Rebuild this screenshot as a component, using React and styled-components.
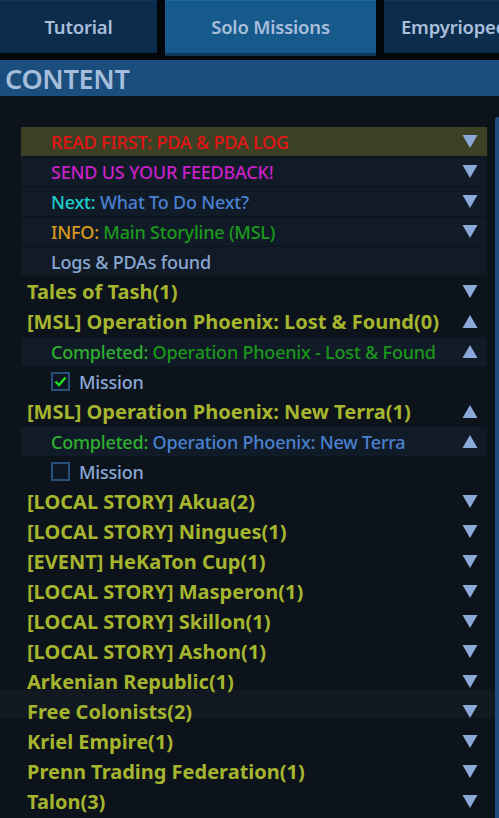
import React from "react";
import styled, { createGlobalStyle } from "styled-components";

const Global = createGlobalStyle`
  html, body { margin: 0; padding: 0; background: #0c131b; }
  body { font-family: "Noto Sans", "Open Sans", sans-serif; overflow: hidden; }
  #root { width: 499px; height: 818px; overflow: hidden; }
`;

const Page = styled.div`
  width: 499px;
  height: 818px;
  display: flex;
  flex-direction: column;
  background: #0c131b;
  overflow: hidden;
`;

const TabBar = styled.div`
  display: flex;
  gap: 8px;
  height: 60px;
  background: #03070b;
  flex-shrink: 0;
`;

const Tab = styled.div`
  flex: 0 0 ${(p) => p.$w}px;
  height: 53px;
  display: flex;
  align-items: center;
  justify-content: ${(p) => (p.$left ? "flex-start" : "center")};
  padding-left: ${(p) => (p.$left ? "17px" : "0")};
  padding-bottom: 2px;
  box-sizing: border-box;
  background: ${(p) => (p.$active ? "#165a8b" : "#0b2c4b")};
  border-top: 1px solid ${(p) => (p.$active ? "#1d6a9f" : "#12375a")};
  box-shadow: ${(p) => (p.$active ? "0 3px 0 0 #0d3658" : "none")};
  color: #a9bedb;
  font-size: 18.5px;
  font-weight: 600;
  letter-spacing: -0.2px;
  white-space: nowrap;
  overflow: hidden;
`;

const Header = styled.div`
  height: 36px;
  background: #1b4e7d;
  display: flex;
  align-items: center;
  padding-left: 5px;
  color: #a6bedb;
  font-size: 27px;
  font-weight: 600;
  letter-spacing: -0.3px;
  flex-shrink: 0;
`;

const Body = styled.div`
  flex: 1;
  display: flex;
  padding-top: 31px;
  padding-left: 21px;
  background:
    linear-gradient(to bottom, transparent 594px, rgba(255,255,255,0.025) 594px, rgba(255,255,255,0.025) 622px, transparent 622px),
    #0c131b;
`;

const List = styled.div`
  display: flex;
  flex-direction: column;
  gap: 1px;
  flex: 0 0 466px;
`;

const ScrollTrack = styled.div`
  flex: 0 0 4px;
  margin-left: 8px;
  margin-top: -10px;
  background: #1d4c7c;
  border-radius: 3px 0 0 0;
`;

const Row = styled.div`
  height: 29px;
  display: flex;
  align-items: center;
  box-sizing: border-box;
  padding-left: ${(p) => p.$indent}px;
  padding-right: 9px;
  background: ${(p) => p.$bg || "transparent"};
  font-size: ${(p) => (p.$cat ? "20px" : "18px")};
  font-weight: ${(p) => (p.$cat ? 700 : 500)};
  letter-spacing: ${(p) => (p.$cat ? "0px" : "-0.2px")};
  color: ${(p) => p.$color || "#a8b830"};
  white-space: nowrap;
`;

const Label = styled.span`
  flex: 1;
`;

const Part = styled.span`
  color: ${(p) => p.$color};
`;

const Arrow = styled.svg`
  width: 16px;
  height: 15px;
  flex-shrink: 0;
`;

const Box = styled.span`
  width: 19px;
  height: 19px;
  box-sizing: border-box;
  border: 2px solid #264f7c;
  background: #0d1724;
  margin-right: 9px;
  display: flex;
  align-items: center;
  justify-content: center;
`;

const Toggle = ({ up }) => (
  <Arrow viewBox="0 0 16 15">
    {up ? (
      <polygon points="8,1 15.5,14 0.5,14" fill="#8ba9d9" />
    ) : (
      <polygon points="0.5,1 15.5,1 8,14" fill="#8ba9d9" />
    )}
  </Arrow>
);

const YELLOW = "#a6b52e";
const SUB = "#111b27";

const rows = [
  { type: "sub", bg: "#3c4126", parts: [["READ FIRST: PDA & PDA LOG", "#e31414"]], arrow: "down" },
  { type: "sub", bg: SUB, parts: [["SEND US YOUR FEEDBACK!", "#c820c8"]], arrow: "down" },
  { type: "sub", bg: SUB, parts: [["Next: ", "#1ccccc"], ["What To Do Next?", "#4a80d0"]], arrow: "down" },
  { type: "sub", bg: SUB, parts: [["INFO: ", "#d99a1e"], ["Main Storyline (MSL)", "#1b9a1b"]], arrow: "down" },
  { type: "sub", bg: SUB, parts: [["Logs & PDAs found", "#89a8d2"]] },
  { type: "cat", text: "Tales of Tash(1)", arrow: "down" },
  { type: "cat", text: "[MSL] Operation Phoenix: Lost & Found(0)", arrow: "up" },
  { type: "sub", bg: SUB, parts: [["Completed: ", "#2eb02e"], ["Operation Phoenix - Lost & Found", "#1a961a"]], arrow: "up" },
  { type: "check", checked: true, text: "Mission" },
  { type: "cat", text: "[MSL] Operation Phoenix: New Terra(1)", arrow: "up" },
  { type: "sub", bg: SUB, parts: [["Completed: ", "#2eb02e"], ["Operation Phoenix: New Terra", "#4a80d0"]], arrow: "up" },
  { type: "check", checked: false, text: "Mission" },
  { type: "cat", text: "[LOCAL STORY] Akua(2)", arrow: "down" },
  { type: "cat", text: "[LOCAL STORY] Ningues(1)", arrow: "down" },
  { type: "cat", text: "[EVENT] HeKaTon Cup(1)", arrow: "down" },
  { type: "cat", text: "[LOCAL STORY] Masperon(1)", arrow: "down" },
  { type: "cat", text: "[LOCAL STORY] Skillon(1)", arrow: "down" },
  { type: "cat", text: "[LOCAL STORY] Ashon(1)", arrow: "down" },
  { type: "cat", text: "Arkenian Republic(1)", arrow: "down" },
  { type: "cat", text: "Free Colonists(2)", arrow: "down" },
  { type: "cat", text: "Kriel Empire(1)", arrow: "down" },
  { type: "cat", text: "Prenn Trading Federation(1)", arrow: "down" },
  { type: "cat", text: "Talon(3)", arrow: "down" },
];

export default function App() {
  return (
    <Page>
      <Global />
      <TabBar>
        <Tab $w={157}>Tutorial</Tab>
        <Tab $w={211} $active>Solo Missions</Tab>
        <Tab $w={160} $left>Empyriopedia</Tab>
      </TabBar>
      <Header>CONTENT</Header>
      <Body>
        <List>
          {rows.map((r, i) => {
            if (r.type === "cat") {
              return (
                <Row key={i} $cat $indent={6} $color={YELLOW}>
                  <Label>{r.text}</Label>
                  <Toggle up={r.arrow === "up"} />
                </Row>
              );
            }
            if (r.type === "check") {
              return (
                <Row key={i} $indent={30} $color="#89a8d8">
                  <Box>
                    {r.checked && (
                      <svg width="13" height="11" viewBox="0 0 13 11">
                        <polyline points="1.5,5.5 5,9 11.5,1.5" fill="none" stroke="#22e022" strokeWidth="2.4" />
                      </svg>
                    )}
                  </Box>
                  <Label>{r.text}</Label>
                </Row>
              );
            }
            return (
              <Row key={i} $indent={30} $bg={r.bg}>
                <Label>
                  {r.parts.map(([t, c], j) => (
                    <Part key={j} $color={c}>{t}</Part>
                  ))}
                </Label>
                {r.arrow && <Toggle up={r.arrow === "up"} />}
              </Row>
            );
          })}
        </List>
        <ScrollTrack />
      </Body>
    </Page>
  );
}
